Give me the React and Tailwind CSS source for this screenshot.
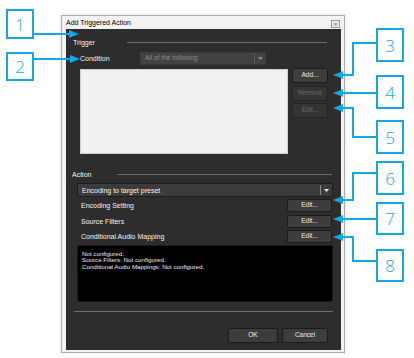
import React from 'react';

const BLUE = '#12a7e6';

function Btn({ children, disabled, className = '' }) {
  return (
    <div
      className={
        'flex items-center justify-center rounded-[2px] border text-[6.5px] ' +
        (disabled
          ? 'border-[#252525] bg-[#343434] text-[#6c6c6c] '
          : 'border-[#1b1b1b] bg-[#3d3d3d] text-[#ececec] ') +
        className
      }
    >
      {children}
    </div>
  );
}

function Caret({ color }) {
  return (
    <svg width="5" height="3" viewBox="0 0 5 3">
      <polygon points="0,0 5,0 2.5,3" fill={color} />
    </svg>
  );
}

function Callout({ n, left, top, h }) {
  return (
    <div
      className="absolute flex items-center justify-center border-2 border-[#12a7e6] bg-white text-[17px] font-light leading-none text-[#12a7e6]"
      style={{ left, top, width: 28, height: h, fontFamily: '"Open Sans", "Liberation Sans", sans-serif' }}
    >
      {n}
    </div>
  );
}

function Arrows() {
  const lines = [
    '33,34 70,34',
    '33,59 71,59',
    '377,43 353,43 353,75 341,75',
    '377,93 341,93',
    '377,137 353,137 353,108 341,108',
    '377,173 353,173 353,200 341,200',
    '377,219 341,219',
    '377,261 353,261 353,237 341,237',
  ];
  const right = [
    [79, 34],
    [80, 59],
  ];
  const left = [
    [333, 75],
    [333, 93],
    [333, 108],
    [333, 200],
    [333, 219],
    [333, 237],
  ];
  return (
    <svg className="absolute left-0 top-0" width="414" height="358" viewBox="0 0 414 358">
      {lines.map((p, i) => (
        <polyline key={i} points={p} fill="none" stroke={BLUE} strokeWidth="2" />
      ))}
      {right.map(([x, y], i) => (
        <polygon key={'r' + i} points={`${x},${y} ${x - 10},${y - 4} ${x - 10},${y + 4}`} fill={BLUE} />
      ))}
      {left.map(([x, y], i) => (
        <polygon key={'l' + i} points={`${x},${y} ${x + 10},${y - 4} ${x + 10},${y + 4}`} fill={BLUE} />
      ))}
    </svg>
  );
}

export default function App() {
  return (
    <div
      className="relative h-[358px] w-[414px] overflow-hidden bg-white"
      style={{ fontFamily: '"Liberation Sans", Arial, sans-serif' }}
    >
      <div className="pl-[61px] pt-[15px]">
        <div className="flex h-[338px] w-[284px] flex-col border border-[#adadad] bg-[#f2f2f2] pb-[2px] pl-[4px] pr-[3px] shadow-[0_0_3px_rgba(0,0,0,0.15)]">
          {/* title bar */}
          <div className="flex h-[13px] items-center justify-between pr-[1px]">
            <span className="text-[7px] leading-none text-black">Add Triggered Action</span>
            <div className="mt-[3px] flex h-[8px] w-[9px] items-center justify-center border border-[#9a9a9a] bg-[#e6e6e6] text-[6px] leading-none text-[#555]">
              ×
            </div>
          </div>

          {/* body */}
          <div className="flex flex-1 flex-col bg-[#2d2d2d] text-[7px] leading-none text-[#f2f2f2]">
            {/* Trigger header */}
            <div className="mt-[8px] flex h-[10px] items-center pl-[7px] pr-[14px]">
              <span className="w-[54px]">Trigger</span>
              <div className="h-px flex-1 bg-[#6d6d6d]" />
            </div>

            {/* Condition */}
            <div className="mt-[5px] flex h-[13px] items-center pl-[14px]">
              <span className="w-[60px]">Condition</span>
              <div className="flex h-[13px] w-[126px] items-center border border-[#3a3a3a] bg-[#424242]">
                <span className="flex-1 pl-[4px] text-[6.5px] text-[#8c8c8c]">All of the following:</span>
                <div className="flex h-full w-[11px] items-center justify-center border-l border-[#5a5a5a]">
                  <Caret color="#8a8a8a" />
                </div>
              </div>
            </div>

            {/* list + buttons */}
            <div className="mt-[3px] flex items-start gap-[4px] pl-[14px]">
              <div className="mt-[1px] h-[85px] w-[208px] border border-[#cfcfcf] bg-[#f0f0f0]" />
              <div className="flex flex-col gap-[2.5px]">
                <Btn className="h-[15px] w-[36px]">Add...</Btn>
                <Btn disabled className="h-[15px] w-[36px]">Remove</Btn>
                <Btn disabled className="h-[15px] w-[36px]">Edit...</Btn>
              </div>
            </div>

            {/* Action header */}
            <div className="mt-[15px] flex h-[10px] items-center pl-[6px] pr-[9px]">
              <span className="w-[45px]">Action</span>
              <div className="h-px flex-1 bg-[#6d6d6d]" />
            </div>

            {/* Encoding select */}
            <div className="ml-[11px] mt-[4px] flex h-[14px] w-[256px] items-center rounded-[1px] border border-[#1d1d1d] bg-[#3b3b3b]">
              <span className="flex-1 pl-[4px] text-[#f4f4f4]">Encoding to target preset</span>
              <div className="flex h-[10px] w-[12px] items-center justify-center border-l border-[#8a8a8a]">
                <Caret color="#f0f0f0" />
              </div>
            </div>

            {/* edit rows */}
            <div className="mt-[2px] flex flex-col gap-[2.5px] pl-[15px] pr-[9px]">
              {['Encoding Setting', 'Source Filters', 'Conditional Audio Mapping'].map((t) => (
                <div key={t} className="flex h-[13px] items-center justify-between">
                  <span>{t}</span>
                  <Btn className="h-[13px] w-[45px]">Edit...</Btn>
                </div>
              ))}
            </div>

            {/* summary */}
            <div className="ml-[11px] mt-[2px] h-[57px] w-[256px] rounded-[2px] border border-[#1a1a1a] bg-black pl-[4px] pt-[5px] text-[6.2px] leading-[6.3px] text-[#f0f0f0]">
              <div>Not configured.</div>
              <div>Source Filters: Not configured.</div>
              <div>Conditional Audio Mappings: Not configured.</div>
            </div>

            <div className="ml-[8px] mt-[9px] h-px w-[259px] bg-[#6d6d6d]" />

            {/* footer */}
            <div className="mt-[16px] flex justify-end gap-[4px] pr-[13px]">
              <Btn className="h-[15px] w-[50px]">OK</Btn>
              <Btn className="h-[15px] w-[46px]">Cancel</Btn>
            </div>
          </div>
        </div>
      </div>

      <Arrows />
      <Callout n="1" left={6} top={9} h={30} />
      <Callout n="2" left={6} top={52} h={29} />
      <Callout n="3" left={376} top={28} h={34} />
      <Callout n="4" left={376} top={75} h={34} />
      <Callout n="5" left={376} top={120} h={34} />
      <Callout n="6" left={376} top={161} h={34} />
      <Callout n="7" left={376} top={202} h={33} />
      <Callout n="8" left={376} top={249} h={33} />
    </div>
  );
}
